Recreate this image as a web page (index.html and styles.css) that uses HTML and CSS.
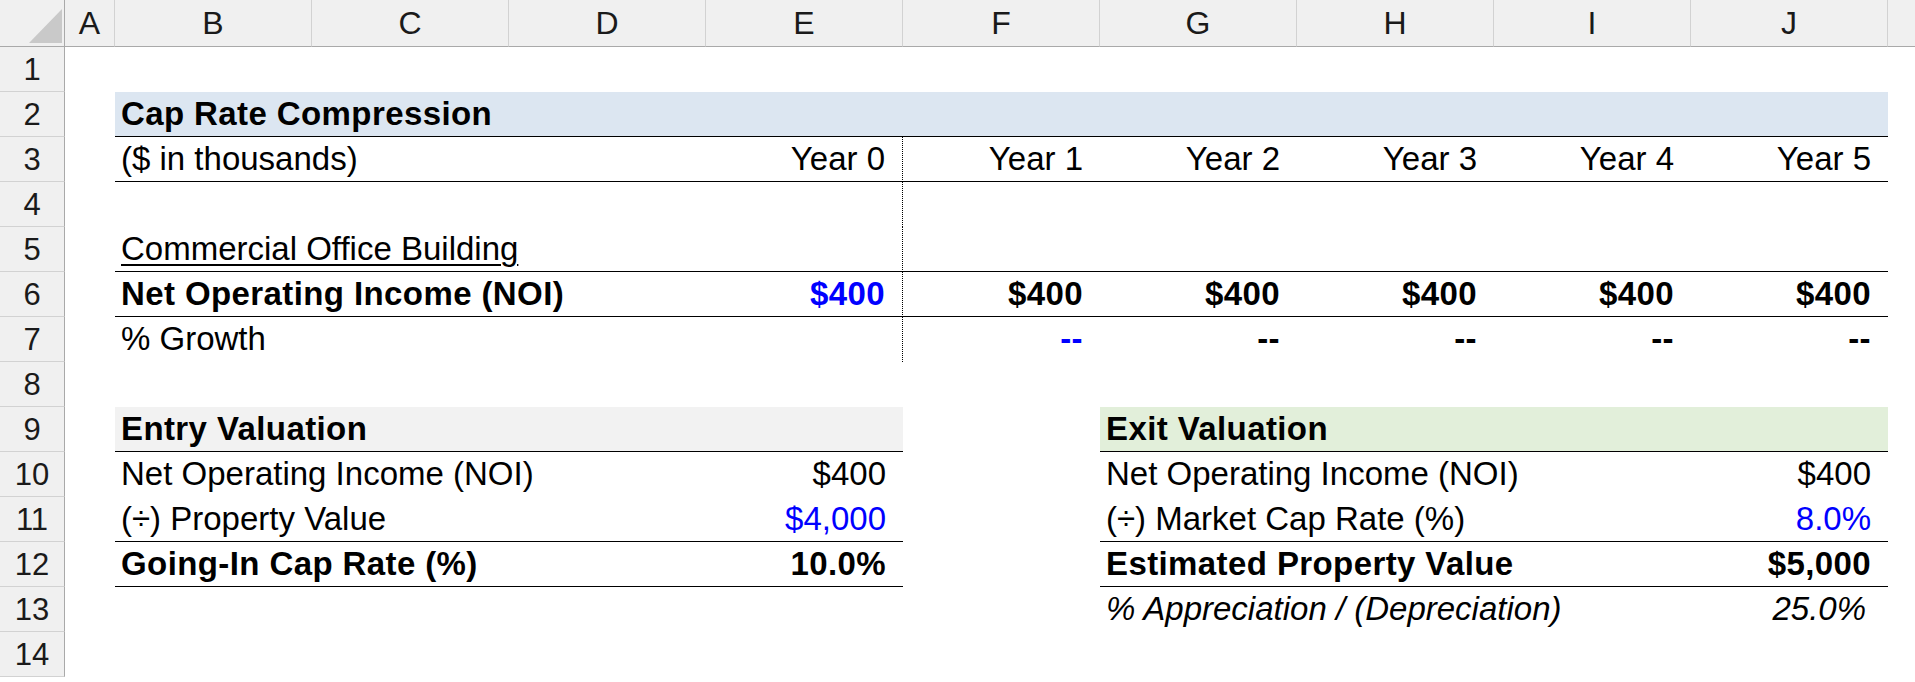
FILE: index.html
```html
<!DOCTYPE html>
<html>
<head>
<meta charset="utf-8">
<title>Cap Rate Compression</title>
<link rel="stylesheet" href="styles.css">
</head>
<body>
<div class="sheet">
  <div class="row hdr">
    <div class="corner"><svg width="64" height="46" viewBox="0 0 64 46"><polygon points="29,43 62,43 62,9" fill="#c9c9c9"/></svg></div>
    <div class="ch">A</div><div class="ch">B</div><div class="ch">C</div><div class="ch">D</div><div class="ch">E</div>
    <div class="ch">F</div><div class="ch">G</div><div class="ch">H</div><div class="ch">I</div><div class="ch">J</div><div class="ch last"></div>
  </div>

  <div class="row"><div class="rh">1</div></div>

  <div class="row">
    <div class="rh">2</div><div class="c"></div>
    <div class="c s9 b bb blue-bg">Cap Rate Compression</div>
  </div>

  <div class="row">
    <div class="rh">3</div><div class="c"></div>
    <div class="c s3 bb">($ in thousands)</div>
    <div class="c r bb dot">Year 0</div>
    <div class="c r bb">Year 1</div><div class="c r bb">Year 2</div><div class="c r bb">Year 3</div><div class="c r bb">Year 4</div><div class="c r bb">Year 5</div>
  </div>

  <div class="row">
    <div class="rh">4</div><div class="c"></div>
    <div class="c s3"></div><div class="c dot"></div>
  </div>

  <div class="row">
    <div class="rh">5</div><div class="c"></div>
    <div class="c s3 bb"><span class="u">Commercial Office Building</span></div>
    <div class="c bb dot"></div>
    <div class="c s5 bb"></div>
  </div>

  <div class="row">
    <div class="rh">6</div><div class="c"></div>
    <div class="c s3 b bb">Net Operating Income (NOI)</div>
    <div class="c r b bb dot inp">$400</div>
    <div class="c r b bb">$400</div><div class="c r b bb">$400</div><div class="c r b bb">$400</div><div class="c r b bb">$400</div><div class="c r b bb">$400</div>
  </div>

  <div class="row">
    <div class="rh">7</div><div class="c"></div>
    <div class="c s3">% Growth</div>
    <div class="c dot"></div>
    <div class="c r b inp">--</div><div class="c r b">--</div><div class="c r b">--</div><div class="c r b">--</div><div class="c r b">--</div>
  </div>

  <div class="row"><div class="rh">8</div></div>

  <div class="row">
    <div class="rh">9</div><div class="c"></div>
    <div class="c s4 b bb gray-bg">Entry Valuation</div>
    <div class="c"></div>
    <div class="c s4 b bb green-bg">Exit Valuation</div>
  </div>

  <div class="row">
    <div class="rh">10</div><div class="c"></div>
    <div class="c s3">Net Operating Income (NOI)</div>
    <div class="c r">$400</div>
    <div class="c"></div>
    <div class="c s3">Net Operating Income (NOI)</div>
    <div class="c r">$400</div>
  </div>

  <div class="row">
    <div class="rh">11</div><div class="c"></div>
    <div class="c s3 bb">(÷) Property Value</div>
    <div class="c r bb inp">$4,000</div>
    <div class="c"></div>
    <div class="c s3 bb">(÷) Market Cap Rate (%)</div>
    <div class="c r bb inp">8.0%</div>
  </div>

  <div class="row">
    <div class="rh">12</div><div class="c"></div>
    <div class="c s3 b bb">Going-In Cap Rate (%)</div>
    <div class="c r b bb">10.0%</div>
    <div class="c"></div>
    <div class="c s3 b bb">Estimated Property Value</div>
    <div class="c r b bb">$5,000</div>
  </div>

  <div class="row">
    <div class="rh">13</div><div class="c"></div>
    <div class="c s4"></div>
    <div class="c"></div>
    <div class="c s3 i">% Appreciation / (Depreciation)</div>
    <div class="c r i it-r">25.0%</div>
  </div>

  <div class="row"><div class="rh">14</div></div>
</div>
</body>
</html>
```

FILE: styles.css
```css
* { box-sizing: border-box; }

body {
  margin: 0;
  background: #ffffff;
  color: #000000;
  font-family: "Liberation Sans", Arial, sans-serif;
}

.sheet {
  width: 1915px;
  height: 682px;
  overflow: hidden;
}

.row {
  display: grid;
  grid-template-columns: 65px 50px repeat(9, 197px) 1fr;
  height: 45px;
}

.row.hdr {
  height: 47px;
}

.corner {
  background: #f0f0f0;
  border-right: 1px solid #a9a9a9;
  border-bottom: 1px solid #a9a9a9;
  height: 47px;
}

.corner svg {
  display: block;
}

.ch {
  background: #f0f0f0;
  border-right: 1px solid #d2d2d2;
  border-bottom: 1px solid #a9a9a9;
  height: 47px;
  font-size: 32px;
  color: #1a1a1a;
  display: flex;
  align-items: center;
  justify-content: center;
  padding-top: 1px;
}

.ch.last {
  border-right: none;
}

.rh {
  background: #f0f0f0;
  border-right: 1px solid #a9a9a9;
  border-bottom: 1px solid #d2d2d2;
  height: 45px;
  font-size: 31px;
  color: #1a1a1a;
  display: flex;
  align-items: center;
  justify-content: center;
  padding-top: 1px;
}

.c {
  height: 45px;
  font-size: 33px;
  line-height: 44px;
  letter-spacing: 0;
  padding: 0 17px 0 6px;
  white-space: nowrap;
  overflow: visible;
}

.s3 { grid-column: span 3; }
.s4 { grid-column: span 4; }
.s5 { grid-column: span 5; }
.s9 { grid-column: span 9; }

.b {
  font-weight: bold;
  letter-spacing: 0.4px;
}

.i {
  font-style: italic;
}

.r {
  text-align: right;
}

.it-r {
  padding-right: 22px;
}

.bb {
  border-bottom: 1px solid #000000;
}

.dot {
  border-right: 1px dotted #000000;
}

.inp {
  color: #0000ff;
}

.u {
  text-decoration: underline;
  text-decoration-thickness: 2px;
  text-underline-offset: 4px;
}

.blue-bg { background: #dce6f1; }
.gray-bg { background: #f2f2f2; }
.green-bg { background: #e2efda; }
```
